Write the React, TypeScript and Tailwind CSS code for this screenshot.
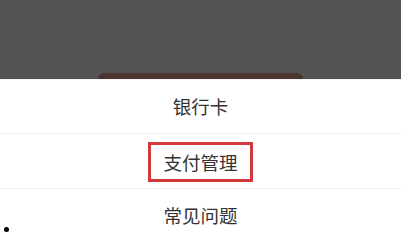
export default function App() {
  const font = { fontFamily: '"Noto Sans CJK SC", "Noto Sans", sans-serif' }

  return (
    <div className="w-[401px] h-[239px] overflow-hidden bg-white" style={font}>
      {/* dimmed page behind the sheet */}
      <div className="h-[79px] bg-[#545454] flex items-end justify-center">
        <div className="w-[205px] h-[6px] rounded-t-[6px] bg-[#4c3531]" />
      </div>

      {/* action sheet */}
      <div className="flex flex-col text-[#333333] text-[18.5px] leading-none">
        <div className="h-[54px] flex items-center justify-center border-t border-[#f3f3f3]">
          银行卡
        </div>
        <div className="h-[55px] flex items-center justify-center border-t border-[#eeeeee]">
          <div className="w-[105px] h-[40px] mt-[2px] flex items-center justify-center border-[3px] border-[#d23a3c]">
            支付管理
          </div>
        </div>
        <div className="relative h-[54px] flex items-center justify-center border-t border-[#eeeeee]">
          常见问题
          <span className="absolute left-[4px] top-[38px] w-[5px] h-[5px] rounded-full bg-black" />
        </div>
      </div>
    </div>
  )
}
